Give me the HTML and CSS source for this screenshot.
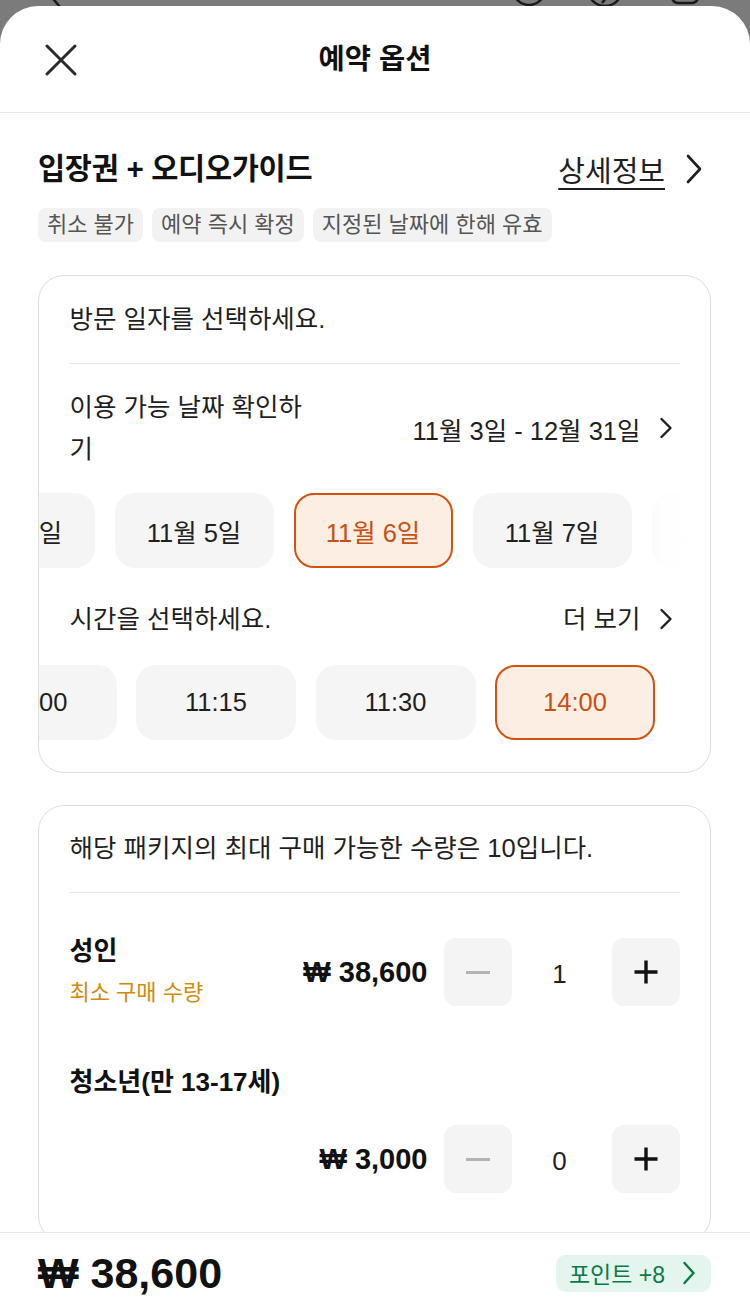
FILE: index.html
```html
<!DOCTYPE html>
<html lang="ko">
<head>
<meta charset="utf-8">
<title>예약 옵션</title>
<link rel="stylesheet" href="styles.css">
</head>
<body>
<div class="backdrop">
  <svg class="backdrop-icons" width="750" height="6" viewBox="0 0 750 6">
    <line x1="49" y1="-6" x2="60" y2="7" stroke="#1a1a1a" stroke-width="2.5"/>
    <circle cx="529" cy="-11" r="16" fill="none" stroke="#1a1a1a" stroke-width="2.5"/>
    <circle cx="605" cy="-11" r="17" fill="none" stroke="#1a1a1a" stroke-width="2.5"/>
    <path d="M602 3 L607 -3" stroke="#1a1a1a" stroke-width="2.5" fill="none"/>
    <rect x="672" y="-30" width="26" height="33" rx="6" fill="none" stroke="#1a1a1a" stroke-width="2.5"/>
  </svg>
</div>
<div class="sheet">
  <header class="sheet-header">
    <button class="close" type="button" aria-label="닫기">
      <svg width="32" height="32" viewBox="0 0 32 32"><path d="M2 2 L30 30 M30 2 L2 30" stroke="#2a2a2a" stroke-width="3" stroke-linecap="round" fill="none"/></svg>
    </button>
    <h1 class="sheet-title">예약 옵션</h1>
    <span class="header-spacer"></span>
  </header>

  <main class="content">
    <section class="product">
      <div class="product-head">
        <h2 class="product-name">입장권 + 오디오가이드</h2>
        <a class="detail-link" href="#"><span class="detail-text">상세정보</span>
          <svg class="chev-lg" width="18" height="30" viewBox="0 0 18 30"><path d="M3 2 L15 15 L3 28" stroke="#1f1f1f" stroke-width="2.6" fill="none" stroke-linecap="round" stroke-linejoin="round"/></svg>
        </a>
      </div>
      <ul class="tags">
        <li>취소 불가</li>
        <li>예약 즉시 확정</li>
        <li>지정된 날짜에 한해 유효</li>
      </ul>
    </section>

    <section class="card">
      <p class="card-lead">방문 일자를 선택하세요.</p>
      <hr class="divider">
      <div class="range-row">
        <span class="range-label">이용 가능 날짜 확인하기</span>
        <span class="range-value">11월 3일 - 12월 31일
          <svg class="chev" width="14" height="22" viewBox="0 0 14 22"><path d="M2.5 2 L11.5 11 L2.5 20" stroke="#1f1f1f" stroke-width="2.4" fill="none" stroke-linecap="round" stroke-linejoin="round"/></svg>
        </span>
      </div>
      <div class="scroller scroller-fade">
        <div class="track track-dates">
          <div class="chip">11월 4일</div>
          <div class="chip">11월 5일</div>
          <div class="chip chip-on">11월 6일</div>
          <div class="chip">11월 7일</div>
          <div class="chip">11월 8일</div>
        </div>
      </div>
      <div class="section-row">
        <span>시간을 선택하세요.</span>
        <span class="more">더 보기
          <svg class="chev" width="14" height="22" viewBox="0 0 14 22"><path d="M2.5 2 L11.5 11 L2.5 20" stroke="#1f1f1f" stroke-width="2.4" fill="none" stroke-linecap="round" stroke-linejoin="round"/></svg>
        </span>
      </div>
      <div class="scroller">
        <div class="track track-times">
          <div class="chip chip-time">11:00</div>
          <div class="chip chip-time">11:15</div>
          <div class="chip chip-time">11:30</div>
          <div class="chip chip-time chip-on">14:00</div>
        </div>
      </div>
    </section>

    <section class="card card-qty">
      <p class="card-lead">해당 패키지의 최대 구매 가능한 수량은 10입니다.</p>
      <hr class="divider">
      <div class="ticket ticket-adult">
        <div class="ticket-info">
          <div class="ticket-name">성인</div>
          <div class="ticket-note">최소 구매 수량</div>
        </div>
        <div class="ticket-buy">
          <span class="ticket-price">₩ 38,600</span>
          <div class="stepper">
            <button class="step-btn" type="button" aria-label="빼기"><span class="minus"></span></button>
            <span class="count">1</span>
            <button class="step-btn" type="button" aria-label="더하기">
              <svg width="26" height="26" viewBox="0 0 26 26"><path d="M13 1.5 V24.5 M1.5 13 H24.5" stroke="#111" stroke-width="3.4" fill="none"/></svg>
            </button>
          </div>
        </div>
      </div>
      <div class="ticket ticket-youth">
        <div class="ticket-name">청소년(만 13-17세)</div>
        <div class="ticket-buy">
          <span class="ticket-price">₩ 3,000</span>
          <div class="stepper">
            <button class="step-btn" type="button" aria-label="빼기"><span class="minus"></span></button>
            <span class="count">0</span>
            <button class="step-btn" type="button" aria-label="더하기">
              <svg width="26" height="26" viewBox="0 0 26 26"><path d="M13 1.5 V24.5 M1.5 13 H24.5" stroke="#111" stroke-width="3.4" fill="none"/></svg>
            </button>
          </div>
        </div>
      </div>
    </section>
  </main>

  <footer class="bottom-bar">
    <span class="total">₩ 38,600</span>
    <a class="points" href="#">포인트 +8
      <svg width="14" height="24" viewBox="0 0 14 24"><path d="M2.5 2 L11.5 12 L2.5 22" stroke="#0c7a48" stroke-width="2.4" fill="none" stroke-linecap="round" stroke-linejoin="round"/></svg>
    </a>
  </footer>
</div>
</body>
</html>
```

FILE: styles.css
```css
* { box-sizing: border-box; margin: 0; padding: 0; }

html, body {
  width: 750px;
  height: 1309px;
  overflow: hidden;
}

body {
  background: #7b7b7b;
  font-family: "Liberation Sans", "Noto Sans CJK KR", sans-serif;
  color: #1f1f1f;
}

.backdrop { height: 6px; overflow: hidden; }
.backdrop-icons { display: block; }

.sheet {
  height: 1303px;
  background: #fff;
  border-radius: 38px 38px 0 0;
  display: flex;
  flex-direction: column;
  overflow: hidden;
}

.sheet-header {
  flex: none;
  height: 107px;
  display: grid;
  grid-template-columns: 120px 1fr 120px;
  align-items: center;
  border-bottom: 1.5px solid #e8e8e8;
}

.close {
  background: none;
  border: 0;
  padding-left: 45px;
  display: flex;
  align-items: center;
  margin-top: 1px;
}

.sheet-title {
  text-align: center;
  font-size: 28.5px;
  font-weight: 700;
  line-height: 36px;
  color: #111;
}

.content {
  flex: 1;
  padding: 36px 39px 0 38px;
  overflow: hidden;
}

.product-head {
  display: flex;
  justify-content: space-between;
  align-items: center;
  height: 40px;
}

.product-name {
  font-size: 29.5px;
  font-weight: 700;
  line-height: 40px;
  color: #111;
  letter-spacing: -0.3px;
}

.detail-link {
  display: flex;
  align-items: center;
  gap: 20px;
  font-size: 29px;
  color: #1f1f1f;
  text-decoration: none;
  padding-right: 8px;
}

.detail-text {
  text-decoration: underline;
  text-underline-offset: 6px;
  text-decoration-thickness: 1.5px;
}

.chev-lg, .chev { display: block; flex: none; }

.tags {
  list-style: none;
  display: flex;
  gap: 9px;
  margin-top: 19px;
}

.tags li {
  height: 34px;
  padding: 0 9px;
  background: #f2f2f2;
  border-radius: 8px;
  font-size: 22px;
  line-height: 34px;
  color: #555;
}

.card {
  margin-top: 33px;
  border: 1.5px solid #dedede;
  border-radius: 26px;
  padding: 27px 30.5px 32px;
  overflow: hidden;
}

.card-qty {
  margin-top: 32px;
  padding-top: 26px;
  padding-bottom: 48px;
}

.card-lead {
  font-size: 25.5px;
  line-height: 32px;
}

.divider {
  border: 0;
  border-top: 1.5px solid #e6e6e6;
  margin-top: 28px;
}

.range-row {
  display: flex;
  justify-content: space-between;
  align-items: center;
  margin-top: 22px;
}

.range-label {
  width: 238px;
  font-size: 25.5px;
  line-height: 42px;
}

.range-value, .more {
  display: flex;
  align-items: center;
  gap: 18px;
  font-size: 25.5px;
  padding-right: 7px;
}

.scroller {
  margin: 23px -30.5px 0;
  overflow: hidden;
  position: relative;
}

.scroller-fade::after {
  content: "";
  position: absolute;
  top: 0;
  right: 0;
  width: 78px;
  height: 100%;
  background: linear-gradient(to right, rgba(255,255,255,0) 0%, rgba(255,255,255,0.85) 35%, #fff 75%);
}

.track {
  display: flex;
  gap: 20px;
}

.track-dates { margin-left: -103.5px; }

.track-times {
  margin-left: -82.5px;
  gap: 19.5px;
}

.chip {
  flex: none;
  width: 159px;
  height: 75px;
  border-radius: 20px;
  background: #f5f5f5;
  border: 2px solid transparent;
  display: flex;
  align-items: center;
  justify-content: center;
  font-size: 25.5px;
  color: #1f1f1f;
}

.chip-time { width: 160px; }

.chip-on {
  background: #fdeee3;
  border-color: #d1530f;
  color: #c9500f;
}

.section-row {
  display: flex;
  justify-content: space-between;
  align-items: center;
  margin-top: 35px;
  font-size: 25.5px;
  line-height: 32px;
}

.section-row + .scroller { margin-top: 30px; }

.ticket-adult {
  display: flex;
  justify-content: space-between;
  align-items: center;
  margin-top: 42px;
}

.ticket-info {
  display: flex;
  flex-direction: column;
  gap: 10px;
}

.ticket-name {
  font-size: 26px;
  font-weight: 700;
  line-height: 32px;
  color: #111;
}

.ticket-note {
  font-size: 22px;
  line-height: 32px;
  color: #d08a0c;
}

.ticket-youth { margin-top: 57px; }

.ticket-youth .ticket-buy {
  justify-content: flex-end;
  margin-top: 27px;
}

.ticket-buy {
  display: flex;
  align-items: center;
  gap: 16px;
}

.ticket-price {
  font-size: 29px;
  font-weight: 700;
  color: #111;
}

.stepper {
  display: flex;
  align-items: center;
}

.step-btn {
  width: 68px;
  height: 68px;
  border: 0;
  border-radius: 12px;
  background: #f4f4f4;
  display: flex;
  align-items: center;
  justify-content: center;
}

.minus {
  display: block;
  width: 24px;
  height: 3px;
  background: #b3b3b3;
}

.count {
  width: 100px;
  text-align: center;
  font-size: 26px;
  color: #1f1f1f;
  padding-top: 4px;
  padding-right: 4px;
}

.bottom-bar {
  flex: none;
  height: 77px;
  border-top: 1.5px solid #e8e8e8;
  background: #fff;
  display: flex;
  justify-content: space-between;
  align-items: center;
  padding: 4px 39px 0 38px;
}

.total {
  font-size: 43px;
  font-weight: 700;
  color: #111;
}

.points {
  display: flex;
  align-items: center;
  gap: 17px;
  height: 37px;
  padding: 0 15px 0 13px;
  background: #e3f5ec;
  border-radius: 10px;
  color: #0c7a48;
  font-size: 23px;
  text-decoration: none;
}
```
